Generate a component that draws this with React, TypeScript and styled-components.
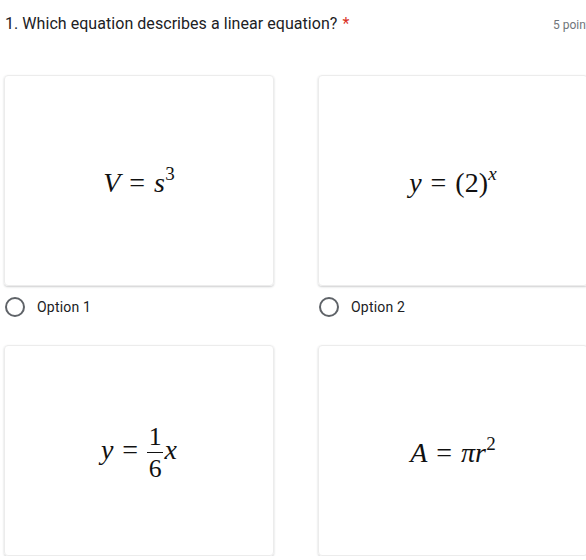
import React from 'react';
import styled, { createGlobalStyle } from 'styled-components';

const GlobalStyle = createGlobalStyle`
    html, body {
        margin: 0;
        padding: 0;
        background: #fff;
        overflow: hidden;
    }
    body {
        font-family: Roboto, "Noto Sans", Arial, sans-serif;
    }
`;

const Page = styled.div`
    width: 600px;
    padding: 0 0 0 4px;
    box-sizing: border-box;
`;

const Header = styled.div`
    display: flex;
    justify-content: space-between;
    align-items: baseline;
    height: 75px;
    padding: 14px 0 0 1px;
    box-sizing: border-box;
`;

const Title = styled.div`
    font-size: 16px;
    color: #202124;
    letter-spacing: 0.05px;
`;

const Required = styled.span`
    color: #d93025;
    margin-left: 5px;
`;

const Points = styled.div`
    font-size: 12px;
    color: #70757a;
    padding-right: 4px;
`;

const OptionGrid = styled.div`
    display: grid;
    grid-template-columns: 270px 270px;
    column-gap: 44px;
    row-gap: 28px;
`;

const OptionCell = styled.div`
    display: flex;
    flex-direction: column;
`;

const Card = styled.div`
    height: 211px;
    box-sizing: border-box;
    border: 1px solid #ececec;
    border-radius: 4px;
    box-shadow: 0 1px 2px rgba(60, 64, 67, 0.25);
    display: flex;
    align-items: center;
    justify-content: center;
    padding-top: 4px;
`;

const Math = styled.div`
    font-family: "Liberation Serif", "Times New Roman", serif;
    font-size: 28px;
    line-height: 1.2;
    color: #111;
    white-space: nowrap;
`;

const V = styled.span`
    font-style: italic;
`;

const Op = styled.span`
    margin: 0 0.32em;
`;

const Sup = styled.span<{ $italic?: boolean }>`
    font-size: 0.68em;
    font-style: ${(p) => (p.$italic ? 'italic' : 'normal')};
    position: relative;
    top: -0.62em;
    margin-left: 0.02em;
`;

const Frac = styled.span`
    display: inline-flex;
    flex-direction: column;
    align-items: center;
    vertical-align: middle;
    font-size: 0.92em;
    line-height: 1;
    margin: 0 0.06em 0 0;
`;

const FracBar = styled.span`
    display: block;
    width: 0.62em;
    height: 1px;
    background: #111;
    margin: 2px 0 3px;
`;

const RadioRow = styled.label`
    display: flex;
    align-items: center;
    gap: 12px;
    margin-top: 11px;
    height: 20px;
    font-size: 14px;
    color: #202124;
    letter-spacing: 0.2px;
    cursor: pointer;
`;

const RadioCircle = styled.span`
    width: 20px;
    height: 20px;
    box-sizing: border-box;
    border: 2px solid #5f6368;
    border-radius: 50%;
    margin-left: 1px;
    flex-shrink: 0;
`;

interface OptionProps {
    label?: string;
    children: React.ReactNode;
}

function OptionItem(props: OptionProps): JSX.Element {
    const { label, children } = props;
    return (
        <OptionCell>
            <Card>
                <Math>{children}</Math>
            </Card>
            {label ? (
                <RadioRow>
                    <RadioCircle />
                    <span>{label}</span>
                </RadioRow>
            ) : null}
        </OptionCell>
    );
}

export default function App(): JSX.Element {
    return (
        <>
            <GlobalStyle />
            <Page>
                <Header>
                    <Title>
                        1. Which equation describes a linear equation?
                        <Required>*</Required>
                    </Title>
                    <Points>5 points</Points>
                </Header>
                <OptionGrid>
                    <OptionItem label='Option 1'>
                        <V>V</V>
                        <Op>=</Op>
                        <V>s</V>
                        <Sup>3</Sup>
                    </OptionItem>
                    <OptionItem label='Option 2'>
                        <V>y</V>
                        <Op>=</Op>
                        <span>(2)</span>
                        <Sup $italic>x</Sup>
                    </OptionItem>
                    <OptionItem>
                        <V>y</V>
                        <Op>=</Op>
                        <Frac>
                            <span>1</span>
                            <FracBar />
                            <span>6</span>
                        </Frac>
                        <V>x</V>
                    </OptionItem>
                    <OptionItem>
                        <V>A</V>
                        <Op>=</Op>
                        <V>πr</V>
                        <Sup>2</Sup>
                    </OptionItem>
                </OptionGrid>
            </Page>
        </>
    );
}
